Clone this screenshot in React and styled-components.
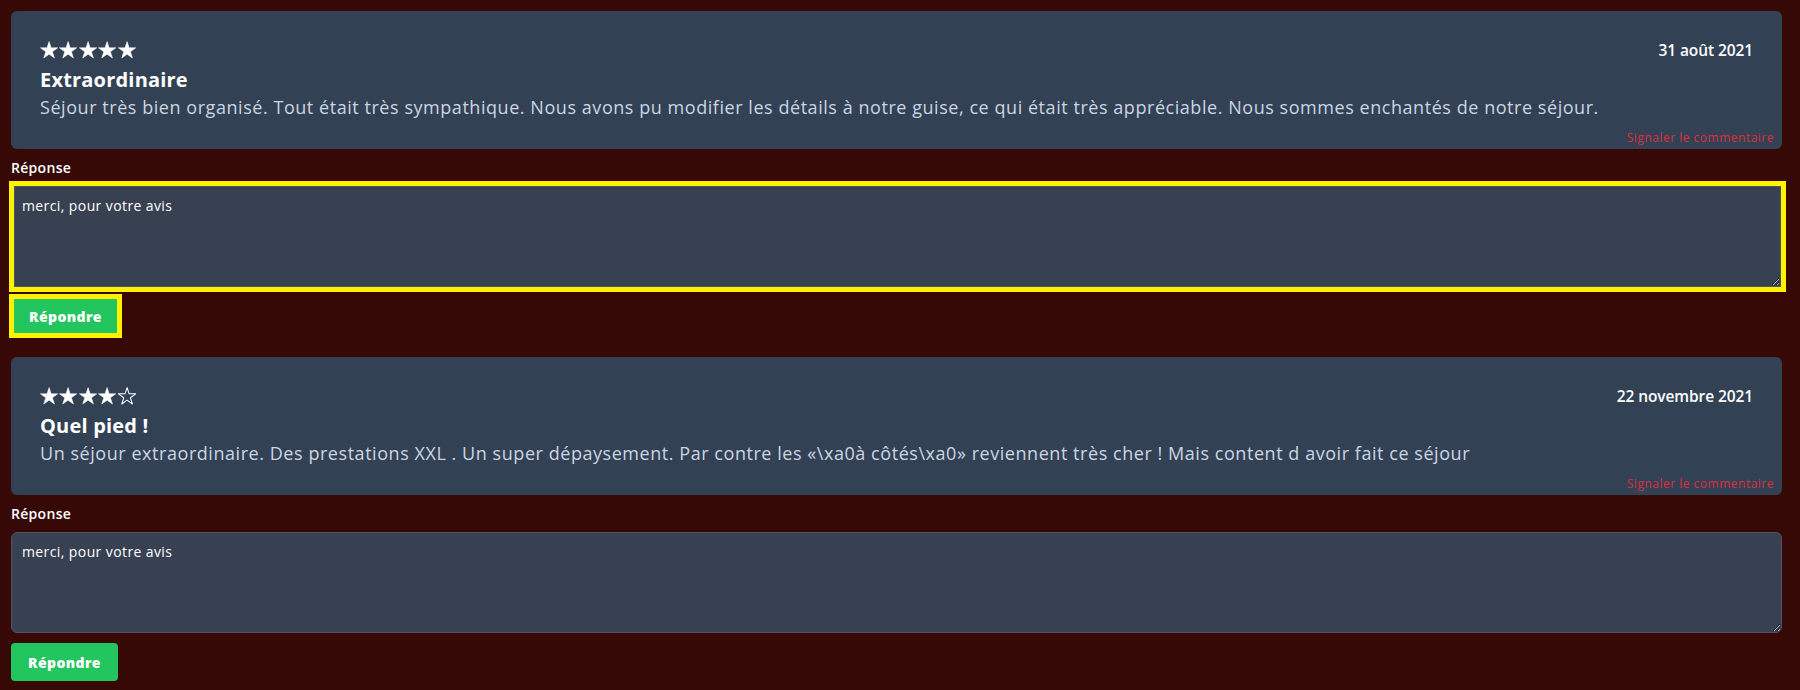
import styled, { createGlobalStyle } from "styled-components";

const reviews = [
	{
		id: 1,
		rating: 5,
		date: "31 août 2021",
		title: "Extraordinaire",
		text: "Séjour très bien organisé. Tout était très sympathique. Nous avons pu modifier les détails à notre guise, ce qui était très appréciable. Nous sommes enchantés de notre séjour.",
		reply: "merci, pour votre avis",
		focused: true,
	},
	{
		id: 2,
		rating: 4,
		date: "22 novembre 2021",
		title: "Quel pied !",
		text: "Un séjour extraordinaire. Des prestations XXL . Un super dépaysement. Par contre les «\\xa0à côtés\\xa0» reviennent très cher ! Mais content d avoir fait ce séjour",
		reply: "merci, pour votre avis",
		focused: false,
	},
];

const STAR =
	"10,0.6 12.25,7.5 19.51,7.5 13.63,11.78 15.88,18.69 10,14.42 4.12,18.69 6.37,11.78 0.49,7.5 7.75,7.5";

function Star({ filled }) {
	return (
		<StarIcon viewBox="0 0 20 19.3">
			<polygon
				points={STAR}
				fill={filled ? "#fff" : "none"}
				stroke="#fff"
				strokeWidth={filled ? 0.6 : 1.1}
				strokeLinejoin="round"
			/>
		</StarIcon>
	);
}

function Review({ review }) {
	return (
		<Block>
			<Card>
				<Header>
					<Stars>
						{[1, 2, 3, 4, 5].map((n) => (
							<Star key={n} filled={n <= review.rating} />
						))}
					</Stars>
					<DateText>{review.date}</DateText>
				</Header>
				<Title>{review.title}</Title>
				<Body>{review.text}</Body>
				<Report>Signaler le commentaire</Report>
			</Card>
			<Label>Réponse</Label>
			<Reply defaultValue={review.reply} $highlight={review.focused} />
			<Button $highlight={review.focused}>Répondre</Button>
		</Block>
	);
}

export default function App() {
	return (
		<>
			<GlobalStyle />
			<Page>
				{reviews.map((r) => (
					<Review key={r.id} review={r} />
				))}
			</Page>
		</>
	);
}

const GlobalStyle = createGlobalStyle`
	* { box-sizing: border-box; }
	body {
		margin: 0;
		background: #360907;
		font-family: "Open Sans", "DejaVu Sans", sans-serif;
	}
`;

const Page = styled.div`
	min-height: 690px;
	padding: 11px 18px 0 11px;
	display: flex;
	flex-direction: column;
	gap: 22px;
`;

const Block = styled.section`
	display: flex;
	flex-direction: column;
	align-items: flex-start;
`;

const Card = styled.div`
	position: relative;
	width: 100%;
	height: 138px;
	padding: 27px 29px 28px 29px;
	background: #334155;
	border-radius: 6px;
`;

const Header = styled.div`
	display: flex;
	justify-content: space-between;
	align-items: center;
	height: 24px;
`;

const Stars = styled.div`
	display: flex;
	gap: 1.2px;
`;

const StarIcon = styled.svg`
	width: 18.2px;
	height: 17.6px;
	display: block;
`;

const DateText = styled.span`
	color: #fff;
	font-size: 15.5px;
	font-weight: 600;
	letter-spacing: -0.1px;
`;

const Title = styled.h3`
	margin: 4px 0 0;
	color: #fff;
	font-size: 20px;
	font-weight: 700;
	letter-spacing: 0.2px;
	line-height: 28px;
`;

const Body = styled.p`
	margin: 0;
	color: #cbd5e1;
	font-size: 18px;
	letter-spacing: 0.55px;
	line-height: 27px;
`;

const Report = styled.a`
	position: absolute;
	right: 8px;
	bottom: 3px;
	color: #dc2f3a;
	font-size: 12px;
	letter-spacing: 0.5px;
	line-height: 16px;
	cursor: pointer;
`;

const Label = styled.label`
	margin-top: 9px;
	color: #fff;
	font-size: 14px;
	font-weight: 600;
	letter-spacing: 0.3px;
	line-height: 20px;
`;

const Reply = styled.textarea`
	margin-top: 8px;
	margin-left: ${(p) => (p.$highlight ? "3px" : "0")};
	width: ${(p) => (p.$highlight ? "calc(100% - 4px)" : "100%")};
	height: 101px;
	padding: ${(p) => (p.$highlight ? "9px 7px" : "9px 10px")};
	background: #374151;
	border: 1px solid #4b5563;
	border-radius: ${(p) => (p.$highlight ? "0" : "6px")};
	color: #fff;
	font-family: inherit;
	font-size: 14px;
	letter-spacing: 0.4px;
	line-height: 20px;
	resize: vertical;
	outline: ${(p) => (p.$highlight ? "5px solid #fff200" : "none")};
	outline-offset: 0;
`;

const Button = styled.button`
	margin-top: 10px;
	margin-left: ${(p) => (p.$highlight ? "1px" : "0")};
	width: 107px;
	height: 38px;
	border: none;
	border-radius: ${(p) => (p.$highlight ? "0" : "4px")};
	background: #22c55e;
	color: #fff;
	font-family: inherit;
	font-size: 14px;
	font-weight: 800;
	letter-spacing: 0.4px;
	cursor: pointer;
	outline: ${(p) => (p.$highlight ? "5px solid #fff200" : "none")};
	outline-offset: -2px;
`;
